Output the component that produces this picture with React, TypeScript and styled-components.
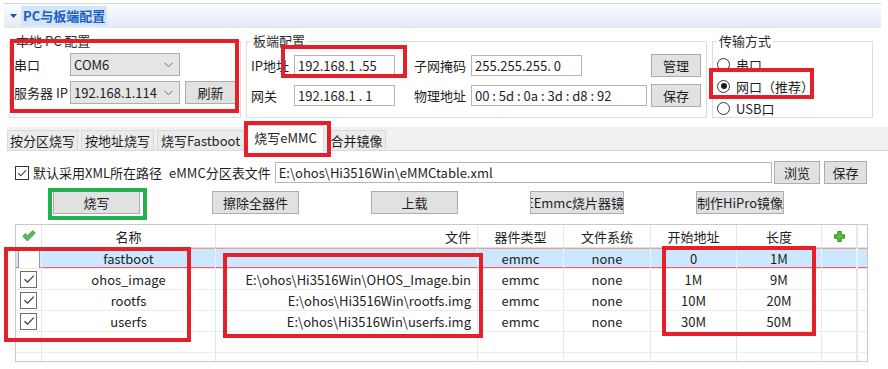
import styled, { createGlobalStyle } from 'styled-components';

const GlobalStyle = createGlobalStyle`
  html, body {
    margin: 0;
    padding: 0;
    background: #fff;
  }
  body {
    font-family: "Noto Sans CJK SC", "Microsoft YaHei", sans-serif;
    font-size: 13px;
    color: #1e1e1e;
  }
`;

const Page = styled.div`
  position: relative;
  width: 888px;
  height: 369px;
  overflow: hidden;
  background: #fff;
`;

// ---- header ----
const SectionHeader = styled.div`
  margin: 3px 7px 0 4px;
  height: 24px;
  border-top: 1px solid #cfd9e6;
  background: linear-gradient(#fbfcfe, #e3eaf3);
  display: flex;
  align-items: center;
  padding-left: 6px;
`;

const HeaderTitle = styled.span`
  margin-left: 4px;
  padding: 0 2px;
  line-height: 20px;
  background: #d3e6f9;
  color: #1b5fbf;
  font-weight: bold;
`;

// ---- config groups ----
const ConfigRow = styled.div`
  display: flex;
  gap: 5px;
  margin-top: 5px;
  padding-left: 9px;
`;

const Group = styled.fieldset<{ $w: number }>`
  box-sizing: border-box;
  width: ${p => p.$w}px;
  height: 85px;
  min-width: 0;
  margin: 0;
  padding: 4px 5px 0 4px;
  border: 1px solid #dcdcdc;
`;

const Legend = styled.legend`
  padding: 0 2px;
  line-height: 16px;
  color: #2b2b2b;
`;

const FormRows = styled.div<{ $gap: number }>`
  display: flex;
  flex-direction: column;
  gap: ${p => p.$gap}px;
`;

const FormRow = styled.div<{ $h: number }>`
  display: flex;
  align-items: center;
  height: ${p => p.$h}px;
`;

const Label = styled.span<{ $w: number; $ml?: number }>`
  width: ${p => p.$w}px;
  margin-left: ${p => p.$ml || 0}px;
  flex-shrink: 0;
  overflow: hidden;
  white-space: nowrap;
`;

const Combo = styled.div`
  box-sizing: border-box;
  width: 110px;
  height: 23px;
  border: 1px solid #adadad;
  background: #e5e5e5;
  display: flex;
  align-items: center;
  padding: 0 6px 0 3px;
  flex-shrink: 0;
`;

const ComboText = styled.span`
  flex: 1;
  overflow: hidden;
  white-space: nowrap;
`;

const TextBox = styled.div<{ $w?: number }>`
  box-sizing: border-box;
  ${p => (p.$w ? `width: ${p.$w}px; flex-shrink: 0;` : 'flex: 1;')}
  height: 21px;
  border: 1px solid #b4b4b4;
  background: #fff;
  padding: 0 3px;
  line-height: 19px;
  white-space: pre;
  overflow: hidden;
`;

const Button = styled.button<{ $w: number; $ml?: number; $auto?: boolean; $clipLeft?: boolean }>`
  box-sizing: border-box;
  width: ${p => p.$w}px;
  height: 23px;
  flex-shrink: 0;
  margin-left: ${p => (p.$auto ? 'auto' : `${p.$ml || 0}px`)};
  padding: 0;
  border: 1px solid #adadad;
  background: #e1e1e1;
  font: inherit;
  color: #1e1e1e;
  white-space: nowrap;
  overflow: hidden;
  text-align: ${p => (p.$clipLeft ? 'left' : 'center')};
  text-indent: ${p => (p.$clipLeft ? '-5px' : '0')};
`;

const RadioRow = styled.div`
  display: flex;
  align-items: center;
  gap: 6px;
  height: 22px;
`;

const RadioCircle = styled.span<{ $on?: boolean }>`
  box-sizing: border-box;
  width: 13px;
  height: 13px;
  border: 1px solid #333;
  border-radius: 50%;
  background: #fff;
  display: grid;
  place-items: center;

  &::after {
    content: '';
    width: 6px;
    height: 6px;
    border-radius: 50%;
    background: ${p => (p.$on ? '#1a1a1a' : 'transparent')};
  }
`;

// ---- tabs ----
const TabStrip = styled.div`
  box-sizing: border-box;
  margin: 9px 0 0 7px;
  height: 24px;
  background: #f0f0f0;
  border-bottom: 1px solid #dadada;
  display: flex;
  align-items: flex-end;
  gap: 3px;
`;

const Tab = styled.div<{ $active?: boolean; $w: number }>`
  box-sizing: border-box;
  width: ${p => p.$w}px;
  height: ${p => (p.$active ? 26 : 20)}px;
  margin-bottom: ${p => (p.$active ? -1 : 0)}px;
  padding-top: ${p => (p.$active ? 2 : 0)}px;
  border: 1px solid #d9d9d9;
  border-bottom: none;
  background: ${p => (p.$active ? '#fff' : '#ebebeb')};
  line-height: 19px;
  text-align: center;
  white-space: nowrap;
`;

// ---- emmc tab content ----
const PathRow = styled.div`
  display: flex;
  align-items: center;
  width: 852px;
  height: 23px;
  margin: 10px 0 0 15px;
`;

const CheckBox = styled.span`
  box-sizing: border-box;
  width: 14px;
  height: 14px;
  border: 1px solid #333;
  background: #fff;
  display: grid;
  place-items: center;
  flex-shrink: 0;
  margin-right: 4px;
`;

const Caption = styled.span<{ $mr: number }>`
  margin-right: ${p => p.$mr}px;
  white-space: nowrap;
`;

const ActionRow = styled.div`
  display: flex;
  gap: 72px;
  margin-top: 7px;
  padding-left: 53px;
`;

// ---- table ----
const TableBox = styled.div`
  box-sizing: border-box;
  width: 853px;
  height: 138px;
  margin: 10px 0 0 15px;
  border: 1px solid #c8c8c8;
  overflow: hidden;
`;

const GridRow = styled.div<{ $head?: boolean; $selected?: boolean }>`
  display: grid;
  grid-template-columns: 26px 174px 262px 86px 87px 86px 85px 35px 1px;
  height: ${p => (p.$head ? 23 : 21)}px;
  box-sizing: border-box;
  border-bottom: 1px solid ${p => (p.$head ? '#dedede' : '#ececec')};
  background: ${p => (p.$selected ? '#cce8ff' : '#fff')};
  box-shadow: ${p =>
    p.$selected ? 'inset 0 1px 0 #f29a9a, inset 0 -1px 0 #ee5d68' : 'none'};
`;

const Cell = styled.div<{ $align?: 'left' | 'center' | 'right'; $selected?: boolean }>`
  border-right: 1px solid ${p => (p.$selected ? '#e6f2fd' : '#e6e6e6')};
  display: flex;
  align-items: center;
  justify-content: ${p =>
    p.$align === 'right' ? 'flex-end' : p.$align === 'left' ? 'flex-start' : 'center'};
  padding: ${p => (p.$align === 'right' ? '0 6px 0 0' : '0')};
  white-space: nowrap;
  overflow: hidden;
  color: #222;
`;

const RowCheck = styled.span`
  box-sizing: border-box;
  width: 17px;
  height: 17px;
  border: 1px solid #6e6e6e;
  background: #fff;
  display: grid;
  place-items: center;
`;

const EmptyCheck = styled.span`
  box-sizing: border-box;
  width: 22px;
  height: 100%;
  border-left: 1px solid #9a9a9a;
  border-right: 1px solid #9a9a9a;
  background: #fff;
`;

// ---- annotation frames drawn over the screenshot ----
const Mark = styled.div<{ $x: number; $y: number; $w: number; $h: number; $green?: boolean }>`
  position: absolute;
  left: ${p => p.$x}px;
  top: ${p => p.$y}px;
  width: ${p => p.$w}px;
  height: ${p => p.$h}px;
  box-sizing: border-box;
  border: 4px solid ${p => (p.$green ? '#22b14c' : '#e5202a')};
  pointer-events: none;
`;

const Chevron = () => (
  <svg width="9" height="6" viewBox="0 0 9 6">
    <path d="M0.5 0.8 L4.5 4.8 L8.5 0.8" fill="none" stroke="#6b6b6b" strokeWidth="1" />
  </svg>
);

const Tick = ({ size }: { size: number }) => (
  <svg width={size} height={size} viewBox="0 0 14 14">
    <path d="M2.5 7.2 L5.6 10.2 L11.8 3.6" fill="none" stroke="#3a3a3a" strokeWidth="1.2" />
  </svg>
);

const GreenTick = () => (
  <svg width="14" height="12" viewBox="0 0 14 12">
    <path d="M0.8 6.2 L3.4 3.6 L5.4 5.8 L10.8 0.6 L13.3 3.1 L5.4 11 Z" fill="#5cb85c" stroke="#3f8f3a" strokeWidth="0.8" />
  </svg>
);

const GreenPlus = () => (
  <svg width="11" height="11" viewBox="0 0 11 11">
    <path d="M3.8 0.5 H7.2 V3.8 H10.5 V7.2 H7.2 V10.5 H3.8 V7.2 H0.5 V3.8 H3.8 Z" fill="#58c23a" stroke="#2f7f1c" strokeWidth="0.9" />
  </svg>
);

const rows = [
  { name: 'fastboot', file: '', start: '0', len: '1M', checked: false, selected: true },
  { name: 'ohos_image', file: 'E:\\ohos\\Hi3516Win\\OHOS_Image.bin', start: '1M', len: '9M', checked: true },
  { name: 'rootfs', file: 'E:\\ohos\\Hi3516Win\\rootfs.img', start: '10M', len: '20M', checked: true },
  { name: 'userfs', file: 'E:\\ohos\\Hi3516Win\\userfs.img', start: '30M', len: '50M', checked: true },
];

const tabs = [
  { label: '按分区烧写', w: 71 },
  { label: '按地址烧写', w: 73 },
  { label: '烧写Fastboot', w: 87 },
  { label: '烧写eMMC', w: 77, active: true },
  { label: '合并镜像', w: 59 },
];

const App = () => {
  return (
    <Page>
      <GlobalStyle />

      <SectionHeader>
        <svg width="7" height="4" viewBox="0 0 7 4">
          <path d="M0 0 H7 L3.5 4 Z" fill="#1d4f91" />
        </svg>
        <HeaderTitle>PC与板端配置</HeaderTitle>
      </SectionHeader>

      <ConfigRow>
        <Group $w={232}>
          <Legend>本地 PC 配置</Legend>
          <FormRows $gap={5}>
            <FormRow $h={23}>
              <Label $w={56}>串口</Label>
              <Combo>
                <ComboText>COM6</ComboText>
                <Chevron />
              </Combo>
            </FormRow>
            <FormRow $h={23}>
              <Label $w={56}>服务器 IP</Label>
              <Combo>
                <ComboText>192.168.1.114</ComboText>
                <Chevron />
              </Combo>
              <Button $w={51} $ml={5}>刷新</Button>
            </FormRow>
          </FormRows>
        </Group>

        <Group $w={461}>
          <Legend>板端配置</Legend>
          <FormRows $gap={6}>
            <FormRow $h={24}>
              <Label $w={43}>IP地址</Label>
              <TextBox $w={101}>192.168.1 .55</TextBox>
              <Label $w={57} $ml={19}>子网掩码</Label>
              <TextBox $w={111}>255.255.255. 0</TextBox>
              <Button $w={50} $auto>管理</Button>
            </FormRow>
            <FormRow $h={24}>
              <Label $w={43}>网关</Label>
              <TextBox $w={101}>192.168.1 . 1</TextBox>
              <Label $w={57} $ml={19}>物理地址</Label>
              <TextBox $w={176}>00 : 5d : 0a : 3d : d8 : 92</TextBox>
              <Button $w={50} $auto>保存</Button>
            </FormRow>
          </FormRows>
        </Group>

        <Group $w={161}>
          <Legend>传输方式</Legend>
          <FormRows $gap={0}>
            <RadioRow>
              <RadioCircle />
              串口
            </RadioRow>
            <RadioRow>
              <RadioCircle $on />
              网口（推荐）
            </RadioRow>
            <RadioRow>
              <RadioCircle />
              USB口
            </RadioRow>
          </FormRows>
        </Group>
      </ConfigRow>

      <TabStrip>
        {tabs.map(t => (
          <Tab key={t.label} $w={t.w} $active={t.active}>
            {t.label}
          </Tab>
        ))}
      </TabStrip>

      <PathRow>
        <CheckBox>
          <Tick size={12} />
        </CheckBox>
        <Caption $mr={7}>默认采用XML所在路径</Caption>
        <Caption $mr={4}>eMMC分区表文件</Caption>
        <TextBox>E:\ohos\Hi3516Win\eMMCtable.xml</TextBox>
        <Button $w={46} $ml={2}>浏览</Button>
        <Button $w={43} $ml={4}>保存</Button>
      </PathRow>

      <ActionRow>
        <Button $w={87}>烧写</Button>
        <Button $w={87}>擦除全器件</Button>
        <Button $w={87}>上载</Button>
        <Button $w={94} $clipLeft>EEmmc烧片器镜像</Button>
        <Button $w={88}>制作HiPro镜像</Button>
      </ActionRow>

      <TableBox>
        <GridRow $head>
          <Cell>
            <GreenTick />
          </Cell>
          <Cell>名称</Cell>
          <Cell $align="right">文件</Cell>
          <Cell>器件类型</Cell>
          <Cell>文件系统</Cell>
          <Cell>开始地址</Cell>
          <Cell>长度</Cell>
          <Cell>
            <GreenPlus />
          </Cell>
          <Cell />
        </GridRow>
        {rows.map(r => (
          <GridRow key={r.name} $selected={r.selected}>
            <Cell $selected={r.selected}>
              {r.checked ? (
                <RowCheck>
                  <Tick size={14} />
                </RowCheck>
              ) : (
                <EmptyCheck />
              )}
            </Cell>
            <Cell $selected={r.selected}>{r.name}</Cell>
            <Cell $selected={r.selected} $align="right">{r.file}</Cell>
            <Cell $selected={r.selected}>emmc</Cell>
            <Cell $selected={r.selected}>none</Cell>
            <Cell $selected={r.selected}>{r.start}</Cell>
            <Cell $selected={r.selected}>{r.len}</Cell>
            <Cell $selected={r.selected} />
            <Cell $selected={r.selected} />
          </GridRow>
        ))}
        {[0, 1].map(i => (
          <GridRow key={`empty-${i}`}>
            <Cell />
            <Cell />
            <Cell />
            <Cell />
            <Cell />
            <Cell />
            <Cell />
            <Cell />
            <Cell />
          </GridRow>
        ))}
      </TableBox>

      <Mark $x={10} $y={39} $w={229} $h={74} />
      <Mark $x={281} $y={45} $w={126} $h={33} />
      <Mark $x={709} $y={68} $w={105} $h={31} />
      <Mark $x={244} $y={121} $w={87} $h={36} />
      <Mark $x={48} $y={188} $w={99} $h={32} $green />
      <Mark $x={4} $y={247} $w={187} $h={95} />
      <Mark $x={223} $y={253} $w={260} $h={85} />
      <Mark $x={662} $y={246} $w={154} $h={90} />
    </Page>
  );
};

export default App;
